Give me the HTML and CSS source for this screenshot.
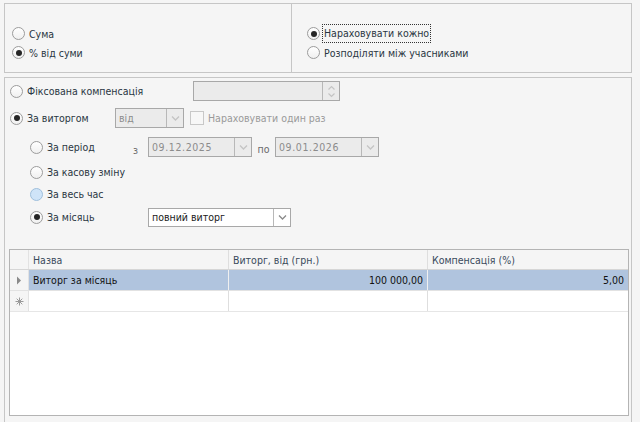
FILE: index.html
```html
<!DOCTYPE html>
<html lang="uk">
<head>
<meta charset="utf-8">
<title>Компенсація</title>
<link rel="stylesheet" href="styles.css">
</head>
<body>
<div class="top">
  <div class="top-left">
    <div class="opt"><span class="radio"></span><span class="lbl">Сума</span></div>
    <div class="opt"><span class="radio on"></span><span class="lbl">% від суми</span></div>
  </div>
  <div class="top-right">
    <div class="opt"><span class="radio on"></span><span class="lbl focus">Нараховувати кожно</span></div>
    <div class="opt"><span class="radio"></span><span class="lbl">Розподіляти між учасниками</span></div>
  </div>
</div>
<div class="main">
  <div class="row r1">
    <div class="opt w-main"><span class="radio"></span><span class="lbl">Фіксована компенсація</span></div>
    <div class="field spin dis"><span class="val"></span><span class="btn">
      <svg width="15" height="17" viewBox="0 0 15 17"><path d="M4.5 6.5 L7.5 3.5 L10.5 6.5" fill="none" stroke="#c4c4c4" stroke-width="1.2"/><path d="M4.5 10.5 L7.5 13.5 L10.5 10.5" fill="none" stroke="#c4c4c4" stroke-width="1.2"/></svg>
    </span></div>
  </div>
  <div class="row r2">
    <div class="opt w-vit"><span class="radio on"></span><span class="lbl">За виторгом</span></div>
    <div class="field combo-vid dis"><span class="val">від</span><span class="btn">
      <svg width="15" height="17" viewBox="0 0 15 17"><path d="M4 6.5 L7.5 10 L11 6.5" fill="none" stroke="#c4c4c4" stroke-width="1.3"/></svg>
    </span></div>
    <span class="check"></span><span class="lbl gray">Нараховувати один раз</span>
  </div>
  <div class="row r3 sub">
    <div class="opt w-sub"><span class="radio"></span><span class="lbl">За період</span></div>
    <span class="small w-z">з</span>
    <div class="field date dis"><span class="val mono">09.12.2025</span><span class="btn">
      <svg width="15" height="17" viewBox="0 0 15 17"><path d="M4 6.5 L7.5 10 L11 6.5" fill="none" stroke="#c4c4c4" stroke-width="1.3"/></svg>
    </span></div>
    <span class="small w-po">по</span>
    <div class="field date dis"><span class="val mono">09.01.2026</span><span class="btn">
      <svg width="15" height="17" viewBox="0 0 15 17"><path d="M4 6.5 L7.5 10 L11 6.5" fill="none" stroke="#c4c4c4" stroke-width="1.3"/></svg>
    </span></div>
  </div>
  <div class="row r4 sub">
    <div class="opt"><span class="radio"></span><span class="lbl">За касову зміну</span></div>
  </div>
  <div class="row r5 sub">
    <div class="opt"><span class="radio hover"></span><span class="lbl">За весь час</span></div>
  </div>
  <div class="row r6 sub">
    <div class="opt w-sub2"><span class="radio on"></span><span class="lbl">За місяць</span></div>
    <div class="field month"><span class="val">повний виторг</span><span class="btn">
      <svg width="15" height="17" viewBox="0 0 15 17"><path d="M4 6.5 L7.5 10 L11 6.5" fill="none" stroke="#8a8a8a" stroke-width="1.3"/></svg>
    </span></div>
  </div>
  <div class="grid">
    <div class="gr head">
      <div class="c ind"></div>
      <div class="c c1">Назва</div>
      <div class="c c2">Виторг, від (грн.)</div>
      <div class="c c3">Компенсація (%)</div>
    </div>
    <div class="gr sel">
      <div class="c ind"><svg width="8" height="9" viewBox="0 0 8 9"><path d="M2 0.5 L6 4.5 L2 8.5 Z" fill="#8a8a8a"/></svg></div>
      <div class="c c1">Виторг за місяць</div>
      <div class="c c2 num">100 000,00</div>
      <div class="c c3 num">5,00</div>
    </div>
    <div class="gr new">
      <div class="c ind"><svg width="9" height="9" viewBox="0 0 9 9"><g stroke="#9a9a9a" stroke-width="1"><path d="M4.5 0.5 V8.5"/><path d="M0.5 4.5 H8.5"/><path d="M1.7 1.7 L7.3 7.3"/><path d="M7.3 1.7 L1.7 7.3"/></g></svg></div>
      <div class="c c1"></div>
      <div class="c c2"></div>
      <div class="c c3"></div>
    </div>
  </div>
</div>
</body>
</html>
```
FILE: styles.css
```css
* { box-sizing: border-box; }
html, body { margin: 0; padding: 0; }
body {
  width: 640px;
  height: 422px;
  overflow: hidden;
  background: #f5f5f5;
  font-family: "DejaVu Sans Condensed", "Liberation Sans", sans-serif;
  font-size: 10.5px;
  color: #2a3642;
}
.top {
  display: flex;
  margin: 3px 8px 0 4px;
  height: 70px;
  border: 1px solid #c6c6c6;
}
.top-left {
  width: 287px;
  border-right: 1px solid #c6c6c6;
  padding: 20px 0 0 7px;
}
.top-right {
  flex: 1;
  padding: 20px 0 0 15px;
}
.opt {
  display: flex;
  align-items: center;
  height: 19px;
}
.radio {
  width: 13px;
  height: 13px;
  border-radius: 50%;
  border: 1px solid #9c9c9c;
  background: linear-gradient(#ffffff, #f0f0f0);
  position: relative;
  flex: none;
  margin-right: 4px;
}
.radio.on::after {
  content: "";
  position: absolute;
  left: 2.5px;
  top: 2.5px;
  width: 6px;
  height: 6px;
  border-radius: 50%;
  background: #262626;
}
.radio.hover {
  background: #cfe4f8;
  border-color: #9fbfdc;
}
.lbl { white-space: nowrap; }
.lbl.focus {
  display: inline-block;
  outline: 1px dotted #333;
  outline-offset: 1px;
  line-height: 15px;
}
.lbl.gray { color: #9a9a9a; }
.main {
  margin: 4px 8px 0 4px;
  height: 360px;
  border: 1px solid #c6c6c6;
  border-bottom: none;
  padding: 3px 2px 0 5px;
}
.row {
  display: flex;
  align-items: center;
  height: 20px;
}
.row.sub { padding-left: 20px; }
.r2 { margin-top: 7px; }
.r3 { margin-top: 9px; }
.r4 { margin-top: 5px; }
.r5 { margin-top: 2px; }
.r6 { margin-top: 3px; }
.w-main { width: 183px; }
.w-vit { width: 105px; }
.w-sub { width: 103px; }
.w-sub2 { width: 118px; }
.w-z { width: 15px; padding-top: 5px; }
.w-po { width: 23px; text-align: center; padding-top: 3px; }
.small { color: #6a6a6a; font-size: 10.5px; }
.field {
  display: flex;
  height: 20px;
  border: 1px solid #a8a8a8;
  background: #fff;
}
.field.dis { background: #ebebeb; color: #8c8c8c; }
.field .val {
  flex: 1;
  padding: 0 3px;
  line-height: 18px;
  white-space: nowrap;
  overflow: hidden;
}
.field .btn {
  width: 17px;
  border-left: 1px solid #b8b8b8;
  display: flex;
  align-items: center;
  justify-content: center;
}
.spin { width: 147px; }
.combo-vid { width: 69px; margin-right: 6px; }
.date { width: 104px; }
.month { width: 143px; height: 19px; }
.month .val { line-height: 17px; color: #1a1a1a; }
.mono { letter-spacing: 0.6px; }
.check {
  width: 14px;
  height: 14px;
  border: 1px solid #c8c8c8;
  background: #f7f7f7;
  margin-right: 4px;
}
.grid {
  margin-top: 22px;
  margin-left: -1px;
  height: 167px;
  border: 1px solid #b4b4b4;
  background: #fff;
}
.gr {
  display: flex;
  height: 21px;
  border-bottom: 1px solid #e2e2e2;
}
.gr.head {
  height: 20px;
  background: #f5f5f5;
  border-bottom: 1px solid #d6d6d6;
  color: #3a4a5c;
}
.c {
  display: flex;
  align-items: center;
  padding: 0 4px;
  border-right: 1px solid #dedede;
  white-space: nowrap;
}
.ind { width: 19px; justify-content: center; padding: 0; background: #f5f5f5; border-right: 1px solid #e2e2e2; }
.c1 { width: 200px; }
.c2 { width: 199px; }
.c3 { flex: 1; border-right: none; }
.num { justify-content: flex-end; }
.sel .c1, .sel .c2, .sel .c3 { background: #b0c4de; color: #111; border-right-color: #f0f0f0; }
.sel .c3 { border-right: none; }
.new .ind, .sel .ind { background: #f5f5f5; }
.new { border-bottom: 1px solid #e6e6e6; }
```
